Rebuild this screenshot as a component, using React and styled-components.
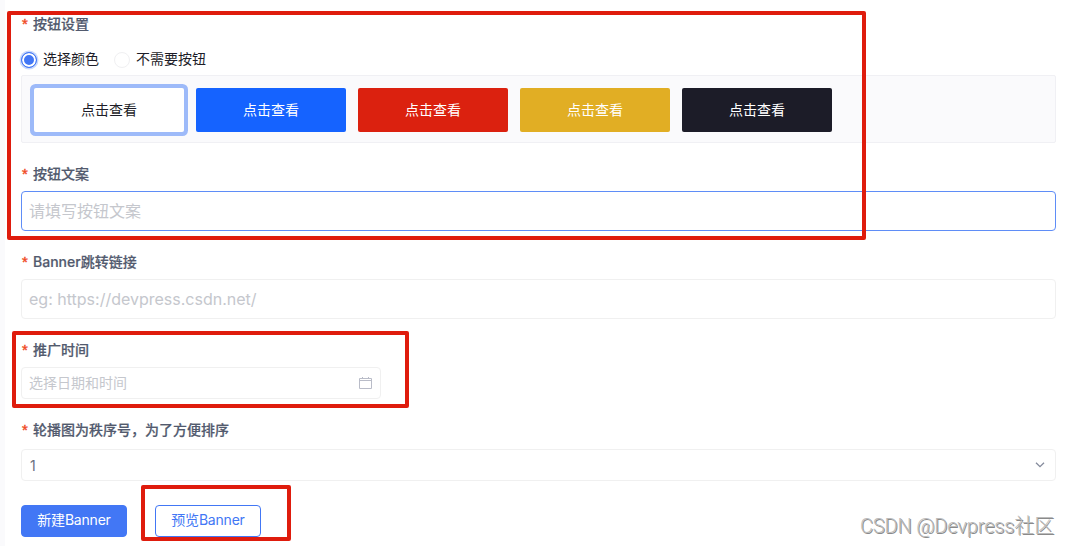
import { useState } from "react";
import styled, { createGlobalStyle } from "styled-components";

const GlobalStyle = createGlobalStyle`
  * {
    box-sizing: border-box;
  }
  body {
    margin: 0;
    background: #fff;
    font-family: Inter, "Noto Sans CJK SC", sans-serif;
    font-size: 14px;
    color: #1d1d28;
  }
  button, input {
    font-family: inherit;
  }
`

const Page = styled.main`
  position: relative;
  height: 546px;
  overflow: hidden;
  padding: 13px 13px 0 16px;
  border-left: 5px solid #fafafc;
`

const Field = styled.section`
  margin-bottom: ${({ $bottom }) => $bottom || 20}px;
`

const Label = styled.label`
  display: flex;
  height: 22px;
  line-height: 22px;
  margin-bottom: ${({ $gap }) => $gap ?? 6}px;
  font-weight: 500;
  color: #525a6e;
  -webkit-text-stroke: 0.2px #525a6e;
  &::before {
    content: "*";
    width: 11px;
    padding-left: 1px;
    font-family: "Liberation Sans", sans-serif;
    font-size: 15px;
    color: #f04a22;
    -webkit-text-stroke: 0.4px #f04a22;
  }
`

const RadioGroup = styled.div`
  display: flex;
  height: 40px;
  padding-top: 4px;
  gap: 15px;
`

const Radio = styled.label`
  display: flex;
  align-items: center;
  height: 40px;
  gap: 6px;
  line-height: 22px;
`

const Dot = styled.span`
  width: 16px;
  height: 16px;
  margin-top: 2px;
  border-radius: 50%;
  background: ${({ $checked }) => ($checked ? "#4277f5" : "#fff")};
  border: 1px solid ${({ $checked }) => ($checked ? "#4277f5" : "#f0f0f2")};
  box-shadow: ${({ $checked }) => ($checked ? "inset 0 0 0 2px #fff, 0 0 0 1.5px #c9d9fc" : "none")};
`

const Swatches = styled.div`
  display: flex;
  gap: 12px;
  height: 68px;
  padding: 12px;
  background: #fafafc;
  border: 1px solid #f0f0f4;
  border-radius: 2px;
`

const Swatch = styled.button`
  width: 150px;
  height: 44px;
  padding: 0;
  border: 0;
  border-radius: 2px;
  font-size: 14px;
  line-height: 22px;
  background: ${({ $bg }) => $bg};
  color: ${({ $color }) => $color || "#fff"};
  box-shadow: ${({ $active }) => ($active ? "0 0 0 4px #9dbaf9" : "none")};
`

const Control = styled.div`
  display: flex;
  align-items: center;
  width: ${({ $width }) => $width || "100%"};
  height: ${({ $large }) => ($large ? 40 : 32)}px;
  padding: 0 8px 0 7px;
  border: 1px solid ${({ $focus }) => ($focus ? "#5f8df7" : "#f0f0f0")};
  border-radius: 4px;
  font-size: ${({ $large }) => ($large ? 16 : 14)}px;
`

const Input = styled.input`
  flex: 1;
  min-width: 0;
  padding: 0 0 ${({ $lift }) => $lift || 0}px;
  border: 0;
  outline: 0;
  background: none;
  font-size: inherit;
  color: #1d1d28;
  &::placeholder {
    color: #c5c7cd;
  }
`

const Value = styled.span`
  flex: 1;
  padding-left: 1px;
  color: #6b7080;
`

const Actions = styled.div`
  display: flex;
  gap: 28px;
`

const Button = styled.button`
  width: 106px;
  height: 32px;
  padding: 0 0 4px;
  border: 1px solid #4277f5;
  border-radius: 4px;
  font-size: 14px;
  letter-spacing: -0.2px;
  background: ${({ $ghost }) => ($ghost ? "#fff" : "#4277f5")};
  color: ${({ $ghost }) => ($ghost ? "#4277f5" : "#fff")};
`

/* red marker drawn over the form */
const Marker = styled.div`
  position: absolute;
  left: ${({ $x }) => $x - 5}px;
  top: ${({ $y }) => $y}px;
  width: ${({ $w }) => $w}px;
  height: ${({ $h }) => $h}px;
  border: 4px solid #df1c0d;
  border-radius: 2px;
  pointer-events: none;
`

const Watermark = styled.div`
  position: absolute;
  right: 15px;
  bottom: 5px;
  font-family: Roboto, "Noto Sans CJK SC", sans-serif;
  font-size: 20px;
  font-weight: 300;
  letter-spacing: -0.15px;
  line-height: 30px;
  white-space: nowrap;
  color: #bcbcbc;
  text-shadow: 1px 1px 0 #8a8a8a;
`

const CalendarIcon = () => (
  <svg width="14" height="14" viewBox="0 0 14 14" fill="none" stroke="#b9bcc8">
    <path d="M1.5 2.5h12v10h-12zM1.5 4.5h12M4.5 1v2M10.5 1v2" />
  </svg>
)

const ArrowIcon = () => (
  <svg width="14" height="14" viewBox="0 0 14 14" fill="none" stroke="#858b9c" strokeWidth="1.3">
    <path d="M3 4.7l4 4 4-4" />
  </svg>
)

const colors = [
  { bg: "#fff", color: "#1d1d28" },
  { bg: "#1563ff" },
  { bg: "#db210f" },
  { bg: "#e1ae24" },
  { bg: "#1c1c28" },
]

function App() {
  const [needButton, setNeedButton] = useState(true)
  const [active, setActive] = useState(0)

  return (
    <>
      <GlobalStyle />
      <Page>
        <Field>
          <Label $gap={0}>按钮设置</Label>
          <RadioGroup>
            <Radio onClick={() => setNeedButton(true)}>
              <Dot $checked={needButton} />选择颜色
            </Radio>
            <Radio onClick={() => setNeedButton(false)}>
              <Dot $checked={!needButton} />不需要按钮
            </Radio>
          </RadioGroup>
          <Swatches>
            {colors.map((item, index) => (
              <Swatch
                key={item.bg}
                $bg={item.bg}
                $color={item.color}
                $active={index === active}
                onClick={() => setActive(index)}
              >
                点击查看
              </Swatch>
            ))}
          </Swatches>
        </Field>
        <Field>
          <Label>按钮文案</Label>
          <Control $large $focus>
            <Input placeholder="请填写按钮文案" />
          </Control>
        </Field>
        <Field>
          <Label>Banner跳转链接</Label>
          <Control $large>
            <Input placeholder="eg: https://devpress.csdn.net/" />
          </Control>
        </Field>
        <Field>
          <Label>推广时间</Label>
          <Control $width="360px">
            <Input $lift={2} placeholder="选择日期和时间" />
            <CalendarIcon />
          </Control>
        </Field>
        <Field $bottom={24}>
          <Label $gap={8}>轮播图为秩序号，为了方便排序</Label>
          <Control>
            <Value>1</Value>
            <ArrowIcon />
          </Control>
        </Field>
        <Actions>
          <Button>新建Banner</Button>
          <Button $ghost>预览Banner</Button>
        </Actions>
        <Marker $x={7} $y={11} $w={859} $h={229} />
        <Marker $x={12} $y={331} $w={397} $h={77} />
        <Marker $x={141} $y={485} $w={150} $h={56} />
        <Watermark>CSDN @Devpress社区</Watermark>
      </Page>
    </>
  )
}

export default App
